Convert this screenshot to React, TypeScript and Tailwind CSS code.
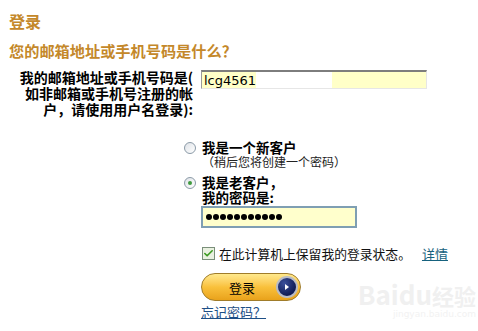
import { Check } from 'lucide-react'

const font = { fontFamily: '"Noto Sans CJK SC", "Noto Sans", sans-serif' }

function Radio({ checked }: { checked?: boolean }) {
  return (
    <span className="mt-[2px] flex h-[12px] w-[12px] shrink-0 items-center justify-center rounded-full border border-[#8b9aa7] bg-gradient-to-br from-[#dfe3e8] to-white">
      {checked && <span className="h-[4px] w-[4px] rounded-full bg-[#3f9a3f]" />}
    </span>
  )
}

export default function App() {
  return (
    <div
      className="relative h-[331px] w-[478px] overflow-hidden bg-white px-[9px] pt-[11px] text-black"
      style={font}
    >
      {/* headings */}
      <h1 className="text-[16px] font-bold leading-[20px] text-[#c4882a]">登录</h1>
      <h2 className="mt-[11px] text-[15.2px] font-bold leading-[17px] text-[#c4882a]">
        您的邮箱地址或手机号码是什么？
      </h2>

      {/* account row */}
      <div className="mt-[10px] flex items-start gap-[8px]">
        <div className="w-[184px] text-right text-[14px] font-bold leading-[16px]">
          <div>我的邮箱地址或手机号码是(</div>
          <div>如非邮箱或手机号注册的帐</div>
          <div>户，请使用用户名登录):</div>
        </div>
        <div className="mt-[1px] flex h-[19px] w-[226px] items-center border border-t-2 border-l-[#9a9a9a] border-t-[#7d7d7d] border-r-[#e6e6e6] border-b-[#e6e6e6] bg-[linear-gradient(to_right,#ffffc8_0,#ffffc8_24%,#ffffff_24%,#ffffff_58%,#ffffc8_58%)] px-[2px]">
          <span className="text-[13px] leading-[15px]" style={{ fontFamily: '"DejaVu Sans", sans-serif' }}>
            lcg4561
          </span>
        </div>
      </div>

      {/* customer choice */}
      <div className="mt-[23px] flex flex-col pl-[175px]">
        <div className="flex items-start gap-[6px]">
          <Radio />
          <div>
            <div className="text-[13.5px] font-bold leading-[15px]">我是一个新客户</div>
            <div className="text-[12px] leading-[14px] text-[#222]">（稍后您将创建一个密码）</div>
          </div>
        </div>

        <div className="mt-[6px] flex items-start gap-[6px]">
          <Radio checked />
          <div>
            <div className="text-[13.5px] font-bold leading-[15px]">我是老客户，</div>
            <div className="text-[13.5px] font-bold leading-[15px]">我的密码是:</div>
          </div>
        </div>

        <div className="ml-[17px] flex flex-col">
          <div className="mt-[1px] flex h-[22px] w-[156px] items-center gap-[1px] border-2 border-[#7f9fb3] bg-[#ffffcc] px-[3px]">
            {Array.from({ length: 11 }).map((_, i) => (
              <span key={i} className="h-[6px] w-[6px] rounded-full bg-black" />
            ))}
          </div>

          <div className="mt-[18px] flex items-center gap-[4px]">
            <span className="ml-[1px] flex h-[13px] w-[13px] items-center justify-center border border-[#7a8f7a] bg-[#e9f1e0]">
              <Check size={11} strokeWidth={3.5} className="text-[#3a9a1f]" />
            </span>
            <span className="text-[12.8px] leading-[15px] text-[#111]">在此计算机上保留我的登录状态。</span>
            <span className="ml-[7px] text-[13px] leading-[15px] text-[#16627e] underline">详情</span>
          </div>

          <button className="mt-[12px] flex h-[28px] w-[100px] items-center justify-between rounded-full border border-[#a07c2a] bg-gradient-to-b from-[#ffe98c] via-[#f9c13b] to-[#e9a21a] pl-[27px] pr-[2px]">
            <span className="text-[13px] leading-[15px] text-black">登录</span>
            <span className="flex h-[22px] w-[22px] items-center justify-center rounded-full border-2 border-[#b9bcc6] bg-[radial-gradient(circle_at_35%_30%,#3a4f9a,#101c55_70%)]">
              <svg width="8" height="8" viewBox="0 0 8 8">
                <path d="M2 1 L6 4 L2 7 Z" fill="#fff" />
              </svg>
            </span>
          </button>

          <div className="mt-[3px] text-[13px] leading-[15px] text-[#1d4f86] underline">忘记密码？</div>
        </div>
      </div>

      {/* watermark */}
      <div className="absolute bottom-[12px] right-[2px] flex flex-col items-end">
        <div className="text-[26px] font-bold leading-[28px] text-[#f0f0f0]">
          Baidu<span className="text-[22px]">经验</span>
        </div>
        <div className="text-[9px] leading-[10px] text-[#f2f2f2]" style={{ fontFamily: '"DejaVu Sans", sans-serif' }}>
          jingyan.baidu.com
        </div>
      </div>
    </div>
  )
}
